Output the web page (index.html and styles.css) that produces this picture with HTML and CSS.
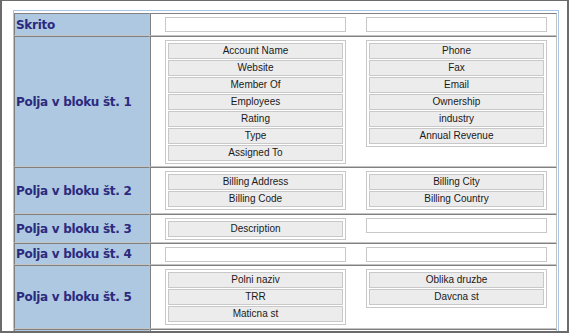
FILE: index.html
```html
<!DOCTYPE html>
<html>
<head>
<meta charset="utf-8">
<link rel="stylesheet" href="styles.css">
</head>
<body>
<div class="frame">
  <div class="tbl">
    <div class="row">
      <div class="lbl">Skrito</div>
      <div class="data">
        <div class="col"><div class="inp"></div></div>
        <div class="col"><div class="inp"></div></div>
      </div>
    </div>
    <div class="row">
      <div class="lbl">Polja v bloku št. 1</div>
      <div class="data slim">
        <div class="col">
          <div class="box">
            <div class="item">Account Name</div>
            <div class="item">Website</div>
            <div class="item">Member Of</div>
            <div class="item">Employees</div>
            <div class="item">Rating</div>
            <div class="item">Type</div>
            <div class="item">Assigned To</div>
          </div>
        </div>
        <div class="col">
          <div class="box">
            <div class="item">Phone</div>
            <div class="item">Fax</div>
            <div class="item">Email</div>
            <div class="item">Ownership</div>
            <div class="item">industry</div>
            <div class="item">Annual Revenue</div>
          </div>
        </div>
      </div>
    </div>
    <div class="row">
      <div class="lbl">Polja v bloku št. 2</div>
      <div class="data">
        <div class="col">
          <div class="box">
            <div class="item">Billing Address</div>
            <div class="item">Billing Code</div>
          </div>
        </div>
        <div class="col">
          <div class="box">
            <div class="item">Billing City</div>
            <div class="item">Billing Country</div>
          </div>
        </div>
      </div>
    </div>
    <div class="row">
      <div class="lbl">Polja v bloku št. 3</div>
      <div class="data slim">
        <div class="col">
          <div class="box">
            <div class="item">Description</div>
          </div>
        </div>
        <div class="col"><div class="inp"></div></div>
      </div>
    </div>
    <div class="row">
      <div class="lbl">Polja v bloku št. 4</div>
      <div class="data slim">
        <div class="col"><div class="inp"></div></div>
        <div class="col"><div class="inp"></div></div>
      </div>
    </div>
    <div class="row">
      <div class="lbl">Polja v bloku št. 5</div>
      <div class="data">
        <div class="col">
          <div class="box">
            <div class="item">Polni naziv</div>
            <div class="item">TRR</div>
            <div class="item">Maticna st</div>
          </div>
        </div>
        <div class="col">
          <div class="box">
            <div class="item">Oblika druzbe</div>
            <div class="item">Davcna st</div>
          </div>
        </div>
      </div>
    </div>
    <div class="row">
      <div class="lbl"></div>
      <div class="data slim">
        <div class="col"><div class="inp"></div></div>
        <div class="col"><div class="inp"></div></div>
      </div>
    </div>
  </div>
</div>
</body>
</html>
```
FILE: styles.css
```css
html, body {
  margin: 0;
  padding: 0;
  background: #ffffff;
}
.frame {
  width: 569px;
  height: 333px;
  box-sizing: border-box;
  border: 2px solid #6b6b6b;
  border-top-width: 1px;
  overflow: hidden;
  padding: 9px 0 0 11px;
  background: #ffffff;
}
.tbl {
  width: 546px;
  box-sizing: border-box;
  border: 1px solid #a9c6e6;
  padding: 2px 1px 0 0;
}
.row {
  display: flex;
}
.lbl {
  width: 136px;
  flex: none;
  box-sizing: border-box;
  border: 1px solid;
  border-color: #808080 #c4c4c4 #c4c4c4 #808080;
  background: #aec8e2;
  display: flex;
  align-items: center;
  padding-left: 1px;
  font: bold 12px "DejaVu Sans", Verdana, sans-serif;
  letter-spacing: -0.3px;
  color: #2c2a7c;
  white-space: nowrap;
}
.data {
  flex: 1;
  box-sizing: border-box;
  border: 1px solid;
  border-color: #808080 #c4c4c4 #c4c4c4 #808080;
  padding: 3px 9px 3px 14px;
  display: flex;
  gap: 20px;
  align-items: flex-start;
  background: #ffffff;
}
.data.slim {
  padding-bottom: 2px;
}
.col {
  width: 181px;
  flex: none;
}
.inp {
  height: 15px;
  box-sizing: border-box;
  border: 1px solid #c8c8c8;
  background: #ffffff;
}
.box {
  border: 1px solid #c8c8c8;
  padding: 2px;
  display: flex;
  flex-direction: column;
  gap: 1px;
  background: #ffffff;
}
.item {
  height: 16px;
  box-sizing: border-box;
  border: 1px solid #c8c8c8;
  background: #ececec;
  font: 10px "Liberation Sans", Arial, sans-serif;
  color: #1a1a1a;
  text-align: center;
  line-height: 14px;
  white-space: nowrap;
}
```
